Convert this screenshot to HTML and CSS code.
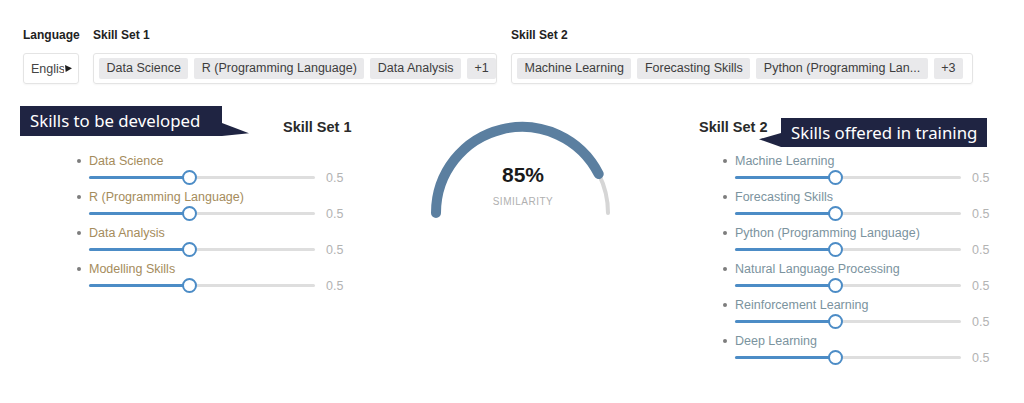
FILE: index.html
```html
<!DOCTYPE html>
<html lang="en">
<head>
<meta charset="utf-8">
<title>Skill similarity</title>
<link rel="stylesheet" href="styles.css">
</head>
<body>
<div class="top">
  <div class="field field-lang">
    <div class="field-label">Language</div>
    <div class="box box-lang"><span class="lang-text">English</span><span class="caret"></span></div>
  </div>
  <div class="field">
    <div class="field-label">Skill Set 1</div>
    <div class="box box-s1">
      <span class="tag">Data Science</span>
      <span class="tag">R (Programming Language)</span>
      <span class="tag">Data Analysis</span>
      <span class="tag">+1</span>
    </div>
  </div>
  <div class="field">
    <div class="field-label">Skill Set 2</div>
    <div class="box box-s2">
      <span class="tag">Machine Learning</span>
      <span class="tag">Forecasting Skills</span>
      <span class="tag">Python (Programming Lan...</span>
      <span class="tag">+3</span>
    </div>
  </div>
</div>

<div class="main">
  <section class="panel panel-left">
    <div class="callout callout-left">Skills to be developed</div>
    <h2 class="heading heading-left">Skill Set 1</h2>
    <ul class="list list-left">
      <li class="item"><div class="label"><span class="dot"></span>Data Science</div><div class="slider"><div class="track"><div class="fill" style="width:100px"></div><div class="thumb" style="left:100px"></div></div><span class="val">0.5</span></div></li>
      <li class="item"><div class="label"><span class="dot"></span>R (Programming Language)</div><div class="slider"><div class="track"><div class="fill" style="width:100px"></div><div class="thumb" style="left:100px"></div></div><span class="val">0.5</span></div></li>
      <li class="item"><div class="label"><span class="dot"></span>Data Analysis</div><div class="slider"><div class="track"><div class="fill" style="width:100px"></div><div class="thumb" style="left:100px"></div></div><span class="val">0.5</span></div></li>
      <li class="item"><div class="label"><span class="dot"></span>Modelling Skills</div><div class="slider"><div class="track"><div class="fill" style="width:100px"></div><div class="thumb" style="left:100px"></div></div><span class="val">0.5</span></div></li>
    </ul>
  </section>

  <div class="gauge">
    <svg width="190" height="110" viewBox="0 0 190 110">
      <path d="M 171.7 56.0 A 86 86 0 0 1 181 95" fill="none" stroke="#d6d6d6" stroke-width="4" stroke-linecap="round"/>
      <path d="M 9 95 A 86 86 0 0 1 171.7 56.0" fill="none" stroke="#5b7fa0" stroke-width="10" stroke-linecap="round"/>
      <text x="96" y="64" text-anchor="middle" class="g-num">85%</text>
      <text x="96" y="87" text-anchor="middle" class="g-lbl">SIMILARITY</text>
    </svg>
  </div>

  <section class="panel panel-right">
    <h2 class="heading heading-right">Skill Set 2</h2>
    <div class="callout callout-right">Skills offered in training</div>
    <ul class="list list-right">
      <li class="item"><div class="label"><span class="dot"></span>Machine Learning</div><div class="slider"><div class="track"><div class="fill" style="width:100px"></div><div class="thumb" style="left:100px"></div></div><span class="val">0.5</span></div></li>
      <li class="item"><div class="label"><span class="dot"></span>Forecasting Skills</div><div class="slider"><div class="track"><div class="fill" style="width:100px"></div><div class="thumb" style="left:100px"></div></div><span class="val">0.5</span></div></li>
      <li class="item"><div class="label"><span class="dot"></span>Python (Programming Language)</div><div class="slider"><div class="track"><div class="fill" style="width:100px"></div><div class="thumb" style="left:100px"></div></div><span class="val">0.5</span></div></li>
      <li class="item"><div class="label"><span class="dot"></span>Natural Language Processing</div><div class="slider"><div class="track"><div class="fill" style="width:100px"></div><div class="thumb" style="left:100px"></div></div><span class="val">0.5</span></div></li>
      <li class="item"><div class="label"><span class="dot"></span>Reinforcement Learning</div><div class="slider"><div class="track"><div class="fill" style="width:100px"></div><div class="thumb" style="left:100px"></div></div><span class="val">0.5</span></div></li>
      <li class="item"><div class="label"><span class="dot"></span>Deep Learning</div><div class="slider"><div class="track"><div class="fill" style="width:100px"></div><div class="thumb" style="left:100px"></div></div><span class="val">0.5</span></div></li>
    </ul>
  </section>
</div>
</body>
</html>
```

FILE: styles.css
```css
* { box-sizing: border-box; }
html, body { margin: 0; padding: 0; background: #fff; }
body {
  width: 1024px;
  height: 403px;
  overflow: hidden;
  font-family: "Liberation Sans", Arial, sans-serif;
  color: #333;
}

.top {
  display: flex;
  gap: 14px;
  padding: 27px 0 0 23px;
}
.field { display: flex; flex-direction: column; gap: 10px; }
.field-lang { width: 56px; }
.field-label {
  font-size: 12px;
  font-weight: 700;
  line-height: 16px;
  color: #222;
  white-space: nowrap;
}
.box {
  height: 31px;
  border: 1px solid #e4e4e4;
  border-radius: 3px;
  display: flex;
  align-items: center;
  gap: 6px;
  padding: 0 5px;
  box-shadow: 0 1px 2px rgba(0,0,0,0.04);
}
.box-lang { width: 56px; position: relative; padding: 0 0 0 7px; overflow: hidden; }
.box-s1 { width: 404px; }
.box-s2 { width: 462px; }
.lang-text { font-size: 12.5px; color: #444; white-space: nowrap; }
.caret {
  position: absolute;
  left: 40px;
  top: 9px;
  width: 9px;
  height: 12px;
  background: #fff;
}
.caret::after {
  content: "";
  position: absolute;
  left: 1px;
  top: 2px;
  width: 7px;
  height: 7px;
  background: #1e1e1e;
  clip-path: polygon(0 0, 100% 45%, 10% 100%);
}
.tag {
  height: 21px;
  line-height: 21px;
  padding: 0 7.5px;
  background: #e9e9eb;
  border-radius: 2px;
  font-size: 12.5px;
  color: #3d3d3d;
  white-space: nowrap;
}

.main { display: flex; margin-top: 20px; }
.panel { position: relative; }
.panel-left { width: 427px; }
.panel-right { flex: 1; }

.heading {
  margin: 15px 0 0;
  font-size: 14.5px;
  line-height: 17px;
  font-weight: 700;
  color: #2a2a2a;
}
.heading-left { margin-left: 283px; }
.heading-right { margin-left: 82px; }

.callout {
  position: absolute;
  background: #1f2442;
  color: #fff;
  font-family: "Noto Sans", "Liberation Sans", sans-serif;
  font-size: 16.8px;
  line-height: 29px;
  padding: 0 10px;
  white-space: nowrap;
}
.callout-left { left: 20px; top: 2px; width: 202px; height: 30px; }
.callout-left::after {
  content: "";
  position: absolute;
  left: 100%;
  top: 17px;
  width: 27px;
  height: 13px;
  background: #1f2442;
  clip-path: polygon(0 0, 100% 78%, 0 100%);
}
.callout-right { left: 164px; top: 14px; width: 206px; height: 29px; }
.callout-right::before {
  content: "";
  position: absolute;
  right: 100%;
  top: 15px;
  width: 22px;
  height: 14px;
  background: #1f2442;
  clip-path: polygon(100% 0, 100% 100%, 0 45%);
}

.list { list-style: none; padding: 0; margin: 17px 0 0; }
.list-left { margin-left: 77px; }
.list-right { margin-left: 106px; }
.item { height: 36px; }
.label {
  display: flex;
  align-items: center;
  height: 16px;
  font-size: 12.5px;
  white-space: nowrap;
}
.list-left .label { color: #a58c5c; }
.list-right .label { color: #7b939e; }
.dot {
  width: 4px; height: 4px;
  border-radius: 50%;
  background: #7d7d7d;
  margin-right: 8px;
  flex: none;
}
.slider {
  display: flex;
  align-items: center;
  height: 16px;
  padding-left: 12px;
}
.track {
  position: relative;
  width: 226px;
  height: 3px;
  background: #dedede;
  border-radius: 2px;
}
.fill {
  height: 3px;
  background: #4c8cc6;
  border-radius: 2px;
}
.thumb {
  position: absolute;
  top: 50%;
  width: 15px;
  height: 15px;
  margin: -7.5px 0 0 -7.5px;
  border: 2px solid #4c8cc6;
  border-radius: 50%;
  background: #fff;
}
.val {
  margin-left: 11px;
  font-size: 12.5px;
  color: #b3b3b3;
  padding-top: 2px;
}

.gauge { width: 190px; margin-top: 14px; flex: none; }
.gauge svg { display: block; }
.g-num { font-family: "Liberation Sans", Arial, sans-serif; font-size: 21px; font-weight: 700; fill: #1a1a1a; }
.g-lbl { font-family: "Liberation Sans", Arial, sans-serif; font-size: 10px; letter-spacing: 0.5px; fill: #b0b0b0; }
```
